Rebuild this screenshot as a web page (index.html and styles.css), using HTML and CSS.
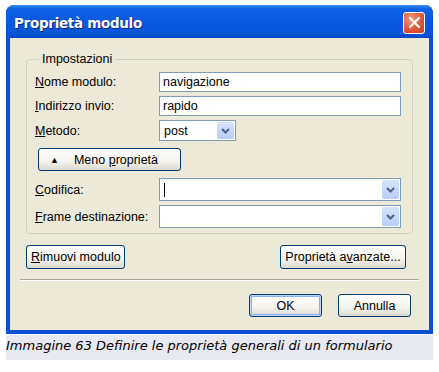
FILE: index.html
```html
<!DOCTYPE html>
<html lang="it">
<head>
  <meta charset="UTF-8">
  <title>Proprietà modulo</title>
  <link rel="stylesheet" href="styles.css">
</head>
<body>

<div class="shot">
  <!-- Finestra di dialogo -->
  <div class="window">
    <div class="titlebar">
      <span class="title">Proprietà modulo</span>
      <span class="close">
        <svg width="13" height="13" viewBox="0 0 13 13"><path d="M2 2 L11 11 M11 2 L2 11" stroke="#fff" stroke-width="2.2" stroke-linecap="round"/></svg>
      </span>
    </div>

    <div class="client">
      <fieldset class="group">
        <legend>Impostazioni</legend>

        <div class="row">
          <label><u>N</u>ome modulo:</label>
          <div class="input">navigazione</div>
        </div>
        <div class="row">
          <label><u>I</u>ndirizzo invio:</label>
          <div class="input">rapido</div>
        </div>
        <div class="row">
          <label><u>M</u>etodo:</label>
          <div class="combo small"><span class="value">post</span><span class="drop"><svg width="9" height="6" viewBox="0 0 9 6"><path d="M1 1 L4.5 4.5 L8 1" fill="none" stroke="#4d6185" stroke-width="2"/></svg></span></div>
        </div>
        <div class="row">
          <button class="btn less"><span class="tri">&#9650;</span><span>Meno <u>p</u>roprietà</span></button>
        </div>
        <div class="row">
          <label><u>C</u>odifica:</label>
          <div class="combo"><span class="value"><span class="caret"></span></span><span class="drop"><svg width="9" height="6" viewBox="0 0 9 6"><path d="M1 1 L4.5 4.5 L8 1" fill="none" stroke="#4d6185" stroke-width="2"/></svg></span></div>
        </div>
        <div class="row">
          <label><u>F</u>rame destinazione:</label>
          <div class="combo"><span class="value"></span><span class="drop"><svg width="9" height="6" viewBox="0 0 9 6"><path d="M1 1 L4.5 4.5 L8 1" fill="none" stroke="#4d6185" stroke-width="2"/></svg></span></div>
        </div>
      </fieldset>

      <div class="actions">
        <button class="btn remove"><u>R</u>imuovi modulo</button>
        <button class="btn advanced">Proprietà a<u>v</u>anzate...</button>
      </div>

      <div class="sep"></div>

      <div class="footer">
        <button class="btn default">OK</button>
        <button class="btn">Annulla</button>
      </div>
    </div>
  </div>

  <div class="caption">Immagine 63 Definire le proprietà generali di un formulario</div>
</div>

</body>
</html>
```

FILE: styles.css
```css
* { box-sizing: border-box; margin: 0; padding: 0; }
body {
  background: #fff;
  font-family: 'Liberation Sans', Arial, sans-serif;
  font-size: 12.5px;
  color: #000;
}

.shot {
  width: 433px;
  padding: 5px 0 0 6px;
}

.window {
  width: 427px;
  background: #0a4fd6;
  border-radius: 8px 8px 0 0;
  padding: 0 4px 4px 4px;
}

.titlebar {
  height: 33px;
  margin: 0 -4px;
  padding: 2px 8px 0 8px;
  display: flex;
  align-items: center;
  justify-content: space-between;
  border-radius: 8px 8px 0 0;
  background: linear-gradient(#3a8cf7 0%, #0d62e4 12%, #0958e0 50%, #0a55d8 85%, #0847c4 100%);
}

.title {
  font-family: 'DejaVu Sans', sans-serif;
  font-weight: bold;
  font-size: 13.5px;
  color: #fff;
  letter-spacing: -0.3px;
  text-shadow: 1px 1px 0 #0a2a7a;
}

.close {
  width: 22px;
  height: 22px;
  border: 1px solid #fff;
  border-radius: 3px;
  background: radial-gradient(circle at 35% 30%, #f29a78, #dd5432 60%, #c13b1c);
  display: flex;
  align-items: center;
  justify-content: center;
}

.client {
  background: #ece9d8;
  padding: 14px 16px 13px 16px;
}

.group {
  border: 1px solid #d0d0bf;
  border-radius: 4px;
  padding: 6px 11px 5px 8px;
}

.group legend {
  padding: 0 3px;
  margin-left: 4px;
}

.row {
  display: flex;
  align-items: center;
  margin-bottom: 4px;
}

.row:last-child { margin-bottom: 0; }

.row label {
  width: 124px;
  flex: none;
}

.input {
  flex: 1;
  height: 20px;
  border: 1px solid #7f9db9;
  background: #fff;
  padding: 2px 3px;
  line-height: 14px;
}

.combo {
  flex: 1;
  height: 23px;
  border: 1px solid #7f9db9;
  background: #fff;
  display: flex;
  align-items: center;
  padding: 1px;
}

.combo.small {
  flex: none;
  width: 77px;
  height: 21px;
}

.combo .value {
  flex: 1;
  padding-left: 3px;
  display: flex;
  align-items: center;
}

.caret {
  width: 1px;
  height: 14px;
  background: #000;
}

.drop {
  width: 17px;
  align-self: stretch;
  background: linear-gradient(#d6e3fd, #b9cdf8);
  border-radius: 2px;
  display: flex;
  align-items: center;
  justify-content: center;
}

.btn {
  font-family: 'Liberation Sans', Arial, sans-serif;
  font-size: 12.5px;
  color: #000;
  height: 24px;
  border: 1px solid #003c74;
  border-radius: 3px;
  background: linear-gradient(#fff 0%, #f4f3ee 60%, #dcd9cc 100%);
  padding: 0 4px;
  white-space: nowrap;
}

.btn.less {
  width: 143px;
  height: 23px;
  margin: 3px 0 3px 3px;
  display: flex;
  align-items: center;
  padding-left: 11px;
}

.tri {
  font-size: 9px;
  margin-right: 15px;
}

.actions {
  display: flex;
  justify-content: space-between;
  margin-top: 11px;
  padding-right: 7px;
}

.btn.remove { width: 99px; }
.btn.advanced { width: 126px; }

.sep {
  height: 1px;
  background: #aca899;
  border-bottom: 1px solid #fff;
  box-sizing: content-box;
  margin: 10px -6px 0 -6px;
}

.footer {
  display: flex;
  justify-content: flex-end;
  gap: 16px;
  margin-top: 13px;
  padding-right: 2px;
}

.footer .btn {
  width: 73px;
  height: 23px;
}

.btn.default {
  box-shadow: inset 0 0 0 1px #bcd4f6, inset 0 0 0 2px #89adf2;
}

.caption {
  margin-top: 1px;
  height: 25px;
  background: #e8e8f0;
  font-family: 'DejaVu Sans', Verdana, sans-serif;
  font-style: italic;
  font-size: 13px;
  padding: 3px 0 0 0;
}
```
